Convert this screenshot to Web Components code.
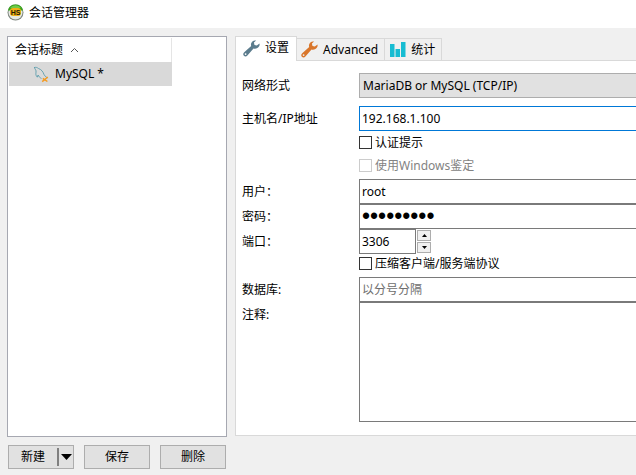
<!DOCTYPE html>
<html lang="zh-CN">
<head>
<meta charset="utf-8">
<title>会话管理器</title>
<style>
  :root {
    --color-window: #f0f0f0;
    --color-control: #e1e1e1;
    --color-border: #adadad;
    --color-field: #7a7a7a;
    --color-line: #d9d9d9;
    --color-accent: #0078d7;
    --label-width: 117px;
    --row-height: 25px;
  }

  html, body {
    height: 100%;
    margin: 0;
  }

  body {
    font: 12px/16px "Noto Sans", "Noto Sans CJK SC", sans-serif;
    color: #000;
    background: var(--color-window);
    overflow: hidden;
  }
</style>
</head>
<body>
<session-manager>
  <session-list slot="list" heading="会话标题"></session-list>
  <session-actions slot="actions"></session-actions>
  <tab-panel slot="detail">
    <tab-button slot="tabs" icon="wrench" color="#5b7c8d" selected>设置</tab-button>
    <tab-button slot="tabs" icon="wrench" color="#d9762b">Advanced</tab-button>
    <tab-button slot="tabs" icon="chart" color="#17bcd2">统计</tab-button>
    <setting-field kind="select" label="网络形式" value="MariaDB or MySQL (TCP/IP)" spaced></setting-field>
    <setting-field kind="text" label="主机名/IP地址" value="192.168.1.100" active></setting-field>
    <setting-check label="认证提示"></setting-check>
    <setting-check label="使用Windows鉴定" disabled></setting-check>
    <setting-field kind="text" label="用户：" value="root" class="after-checks"></setting-field>
    <setting-field kind="password" label="密码：" value="password1"></setting-field>
    <setting-field kind="number" label="端口：" value="3306"></setting-field>
    <setting-check label="压缩客户端/服务端协议" compact></setting-check>
    <setting-field kind="text" label="数据库:" placeholder="以分号分隔"></setting-field>
    <setting-field kind="area" label="注释:"></setting-field>
  </tab-panel>
</session-manager>

<script>
const ICONS = {
  wrench: `
    <svg width="17" height="17" viewBox="0 0 17 17" aria-hidden="true">
      <path fill="currentColor" d="M13.1.6C10.800-.1 8.300 1.500 8 4.100c-.1.7 0 1.300.2 1.900L1.200 12.300c-1.200 1-1.300 2.500-.3 3.500 1 .9 2.500.8 3.500-.3l6.100-6.900c2.200.7 4.600-.4 5.600-2.300.5-.9.600-1.900.4-2.800l-2.700 2.100-2.300-.7-.6-2.300zM2.600 13.200a.9.9 0 1 1 0 1.800.9.9 0 0 1 0-1.800z"/>
    </svg>`,
  chart: `
    <svg width="17" height="17" viewBox="0 0 17 17" aria-hidden="true">
      <path fill="currentColor" d="M1 3h4.500v13H1zM6.500 8H11v8H6.500zM12 1h4.500v15H12z"/>
    </svg>`,
  dolphin: `
    <svg width="17" height="17" viewBox="0 0 17 17" aria-hidden="true">
      <path fill="none" stroke="#5a9cac" stroke-width=".9" stroke-linecap="round" stroke-linejoin="round" d="M1.500 1.500c1.700-.6 2.800.1 4 1 3 1 4.600 3.400 5.400 5.800.5 1.400 1.500 2 3.100 3.300M1.500 1.500c.1 1.400 1.200 2 1.500 3.300.2 1.900-.5 3.200.1 4.500.4 1.100.8 1.500 1.200 1.900l.8-2.200c.8 1.700 1.700 2.700 3 3.300"/>
      <path fill="none" stroke="#f49a20" stroke-width="1.500" d="M14.800 11 9.200 15.600M9.800 12.300l4.600 3.200"/>
    </svg>`,
  app: `
    <svg width="17" height="17" viewBox="0 0 17 17" aria-hidden="true">
      <circle cx="8.500" cy="8.500" r="8" fill="#7c837d"/>
      <circle cx="8.500" cy="8.500" r="7" fill="#e6eae4"/>
      <path fill="#38a51d" d="M1 6.500a7.700 7.700 0 0 1 15 0z"/>
      <path fill="#72cb48" d="M3 4a7 7 0 0 1 11 0z"/>
      <rect x="3" y="4" width="11" height="8" rx="3" fill="#efb016"/>
      <text x="8.500" y="11" text-anchor="middle" font-family="Liberation Sans, sans-serif" font-size="7" font-weight="700" fill="#211b08">HS</text>
    </svg>`
};

const BASE = `
  *, *::before { box-sizing: border-box; }
  svg { display: block; flex: none; }
  button, input, select, textarea { font: inherit; color: inherit; margin: 0; border-radius: 0; outline: none; }
`;

class BaseElement extends HTMLElement {
  constructor() {
    super();
    this.attachShadow({ mode: 'open' });
  }

  connectedCallback() {
    this.shadowRoot.innerHTML = `<style>${BASE}${this.styles()}</style>${this.markup()}`;
  }

  attr(name) {
    return this.getAttribute(name) || '';
  }
}

class SessionManager extends BaseElement {
  styles() {
    return `
      :host { display: flex; flex-direction: column; height: 100%; }
      header { display: flex; align-items: center; gap: 5px; height: 28px; padding: 0 7px 3px; background: #fff; flex: none; }
      h1 { margin: 0; font-size: 12px; font-weight: 400; }
      main { display: flex; flex: 1; gap: 8px; min-height: 0; padding: 8px 0 6px 7px; }
      .side { display: flex; flex-direction: column; flex: none; width: 220px; gap: 8px; }
      ::slotted([slot="list"]) { flex: 1; }
      ::slotted([slot="detail"]) { flex: 1; min-width: 0; margin-bottom: 33px; }
    `;
  }

  markup() {
    return `
      <header>${ICONS.app}<h1>会话管理器</h1></header>
      <main>
        <div class="side"><slot name="list"></slot><slot name="actions"></slot></div>
        <slot name="detail"></slot>
      </main>
    `;
  }
}

class SessionList extends BaseElement {
  styles() {
    return `
      :host { display: block; padding: 1px; border: 1px solid #a6a8b1; background: #fff; }
      table { width: 163px; border-collapse: collapse; }
      th, td { padding: 0; font-weight: 400; text-align: left; }
      th { height: 24px; border-right: 1px solid #e5e5e5; }
      td { height: 24px; background: #d9d9d9; }
      .cell { display: flex; align-items: center; gap: 5px; }
      th .cell { gap: 7px; padding-left: 6px; }
      td .cell { padding-left: 24px; }
    `;
  }

  markup() {
    return `
      <table>
        <thead><tr><th scope="col"><div class="cell">${this.attr('heading')}
          <svg width="9" height="6" viewBox="0 0 9 6"><path d="M1 5l3.500-3.500L8 5" fill="none" stroke="#555"/></svg>
        </div></th></tr></thead>
        <tbody><tr><td><div class="cell">${ICONS.dolphin}<span>MySQL *</span></div></td></tr></tbody>
      </table>
    `;
  }
}

class SessionActions extends BaseElement {
  styles() {
    return `
      :host { display: flex; gap: 10px; padding: 0 1px; }
      button { flex: 1; height: 24px; padding: 0; border: 1px solid var(--color-border); background: var(--color-control); }
      .split { display: flex; flex: 1; border: 1px solid var(--color-border); background: var(--color-control); }
      .split button { height: 22px; border: 0; }
      .split .more { display: flex; flex: 0 0 16px; align-items: center; justify-content: center; height: 18px; margin: 2px 0; border-left: 2px solid #808080; }
    `;
  }

  markup() {
    return `
      <div class="split">
        <button type="button">新建</button>
        <button type="button" class="more" aria-label="更多">
          <svg width="11" height="6" viewBox="0 0 11 6"><path d="M0 0h11L5.500 6z"/></svg>
        </button>
      </div>
      <button type="button">保存</button>
      <button type="button">删除</button>
    `;
  }
}

class TabPanel extends BaseElement {
  styles() {
    return `
      :host { display: flex; flex-direction: column; }
      .tabs { display: flex; align-items: flex-end; height: 25px; flex: none; }
      .tabs::after { content: ""; flex: 1; align-self: stretch; border-bottom: 1px solid var(--color-line); }
      .page { display: flex; flex-direction: column; flex: 1; padding: 12px 0 13px 6px; border: solid var(--color-line); border-width: 0 0 1px 1px; background: #fff; }
      ::slotted([kind="area"]) { flex: 1; }
      ::slotted([spaced]) { margin-bottom: 8px; }
      ::slotted(.after-checks) { margin-top: 2px; }
      ::slotted([compact]) { margin-bottom: 4px; }
    `;
  }

  markup() {
    return `
      <div class="tabs" role="tablist"><slot name="tabs"></slot></div>
      <div class="page" role="tabpanel"><slot></slot></div>
    `;
  }
}

class TabButton extends BaseElement {
  styles() {
    return `
      :host { display: block; }
      button { display: flex; align-items: center; gap: 5px; height: 23px; padding: 0 6px 0 4px; border: 1px solid var(--color-line); border-left: 0; background: var(--color-window); }
      :host([selected]) button { height: 25px; padding: 0 7px 2px; border-width: 1px 1px 0; border-left: 1px solid var(--color-line); background: #fff; }
      i { display: flex; color: ${this.attr('color')}; }
    `;
  }

  markup() {
    return `
      <button type="button" role="tab" aria-selected="${this.hasAttribute('selected')}">
        <i>${ICONS[this.attr('icon')]}</i><slot></slot>
      </button>
    `;
  }
}

class SettingField extends BaseElement {
  styles() {
    return `
      :host { display: flex; min-height: var(--row-height); }
      label { flex: none; width: var(--label-width); line-height: var(--row-height); }
      input, select, textarea { flex: 1; min-width: 0; padding: 0 2px; border: 1px solid var(--color-field); border-right: 0; background: #fff; }
      select { appearance: none; padding: 0 3px; border-color: var(--color-border); background: var(--color-control); }
      textarea { resize: none; }
      input::placeholder { color: #6d6d6d; opacity: 1; }
      input[type="password"] { height: var(--row-height); font: 23px/23px "Liberation Sans", sans-serif; }
      :host([active]) input { border-color: var(--color-accent); }
      input[type="number"] { flex: 0 0 57px; border-right: 1px solid var(--color-field); appearance: textfield; }
      input::-webkit-inner-spin-button { appearance: none; }
      .spin { display: flex; flex-direction: column; gap: 1px; padding: 1px; }
      .spin button { display: flex; align-items: center; justify-content: center; flex: 1; width: 14px; padding: 0; border: 1px solid var(--color-border); background: var(--color-window); }
    `;
  }

  control() {
    const value = this.attr('value');
    switch (this.attr('kind')) {
      case 'select':
        return `<select id="control"><option>${value}</option></select>`;
      case 'area':
        return '<textarea id="control"></textarea>';
      case 'number':
        return `
          <input id="control" type="number" value="${value}">
          <div class="spin">
            <button type="button" data-step="1" aria-label="增加"><svg width="5" height="3" viewBox="0 0 5 3"><path d="M0 3h5L2.500 0z"/></svg></button>
            <button type="button" data-step="-1" aria-label="减少"><svg width="5" height="3" viewBox="0 0 5 3"><path d="M0 0h5L2.500 3z"/></svg></button>
          </div>`;
      default:
        return `<input id="control" type="${this.attr('kind')}" value="${value}" placeholder="${this.attr('placeholder')}">`;
    }
  }

  markup() {
    return `<label for="control">${this.attr('label')}</label>${this.control()}`;
  }

  connectedCallback() {
    super.connectedCallback();
    const input = this.shadowRoot.getElementById('control');
    this.shadowRoot.querySelectorAll('[data-step]').forEach(button => {
      button.addEventListener('click', () => {
        input.value = Number(input.value) + Number(button.dataset.step);
      });
    });
  }
}

class SettingCheck extends BaseElement {
  styles() {
    return `
      :host { display: flex; align-items: center; height: 23px; padding-left: var(--label-width); }
      :host([compact]) { height: 19px; }
      label { display: flex; align-items: center; gap: 3px; }
      input { appearance: none; width: 13px; height: 13px; border: 1px solid #333; background: #fff; }
      input:checked { background: var(--color-accent); }
      :host([disabled]) { color: #838383; }
      :host([disabled]) input { border-color: #ccc; }
    `;
  }

  markup() {
    return `<label><input type="checkbox" ${this.hasAttribute('disabled') ? 'disabled' : ''}>${this.attr('label')}</label>`;
  }
}

customElements.define('session-manager', SessionManager);
customElements.define('session-list', SessionList);
customElements.define('session-actions', SessionActions);
customElements.define('tab-panel', TabPanel);
customElements.define('tab-button', TabButton);
customElements.define('setting-field', SettingField);
customElements.define('setting-check', SettingCheck);
</script>
</body>
</html>
